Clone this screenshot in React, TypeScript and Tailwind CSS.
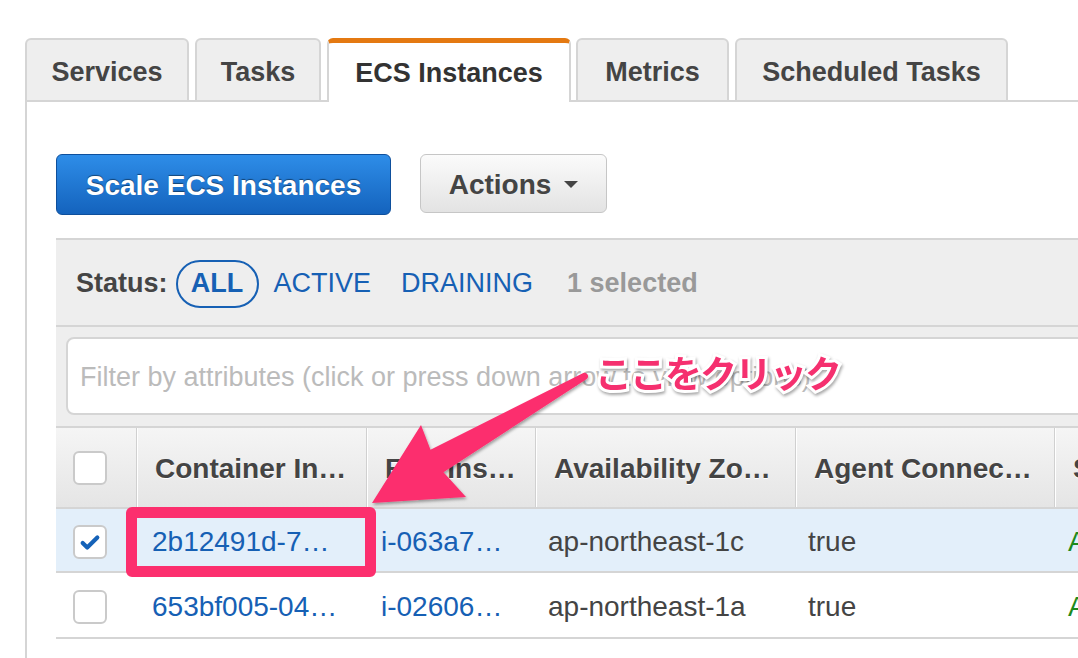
import React from 'react';

const tabs = [
  { label: 'Services', width: 'w-[164px]', gap: '' },
  { label: 'Tasks', width: 'w-[126px]', gap: 'w-[6px]' },
  { label: 'ECS Instances', width: 'w-[244px]', gap: 'w-[6px]', active: true },
  { label: 'Metrics', width: 'w-[153px]', gap: 'w-[5px]' },
  { label: 'Scheduled Tasks', width: 'w-[273px]', gap: 'w-[6px]' },
];

const rows = [
  { selected: true, id: '2b12491d-7…', ec2: 'i-063a7…', az: 'ap-northeast-1c', agent: 'true', status: 'ACTIVE', h: 'h-[64px]' },
  { selected: false, id: '653bf005-04…', ec2: 'i-02606…', az: 'ap-northeast-1a', agent: 'true', status: 'ACTIVE', h: 'h-[66px]' },
];

const cols = 'grid grid-cols-[80px_230px_169px_260px_259px_200px]';

const Checkbox: React.FC<{ checked?: boolean }> = ({ checked }) => (
  <div className="ml-[17px] flex h-[34px] w-[34px] items-center justify-center rounded-[6px] border-2 border-[#cacaca] bg-white">
    {checked && (
      <svg width="22" height="22" viewBox="0 0 24 24">
        <path d="M4 13l5 5L20 7" fill="none" stroke="#1562b8" strokeWidth="4.5" strokeLinecap="round" strokeLinejoin="round" />
      </svg>
    )}
  </div>
);

const App: React.FC = () => {
  return (
    <div className="relative h-[658px] w-[1078px] overflow-hidden bg-white font-['Liberation_Sans',Arial,sans-serif] text-[#444]">
      <div className="pl-[25px] pt-[38px]">
        {/* tabs */}
        <div className="flex items-end">
          {tabs.map((t) => (
            <React.Fragment key={t.label}>
              {t.gap && <div className={`h-[2px] ${t.gap} bg-[#d5d5d5]`} />}
              {t.active ? (
                <div className={`${t.width} flex h-[64px] items-center justify-center rounded-t-[6px] border-x-2 border-t-[5px] border-x-[#d5d5d5] border-t-[#e47911] bg-white pt-[1px] text-[27px] font-bold text-[#333]`}>
                  {t.label}
                </div>
              ) : (
                <div className={`${t.width} flex h-[64px] items-center justify-center rounded-t-[6px] border-2 border-[#d5d5d5] bg-[#eeeeee] pt-[4px] text-[27px] font-bold text-[#444]`}>
                  {t.label}
                </div>
              )}
            </React.Fragment>
          ))}
          <div className="h-[2px] flex-1 bg-[#d5d5d5]" />
        </div>

        {/* panel */}
        <div className="h-[560px] border-l-2 border-[#d5d5d5] pl-[29px] pt-[52px]">
          <div className="flex items-start gap-[29px]">
            <button className="flex h-[61px] w-[335px] items-center justify-center rounded-[6px] border border-[#0e4f9c] bg-gradient-to-b from-[#2e8de8] to-[#1463bd] pt-[2px] text-[28px] font-bold text-white [text-shadow:0_-1px_1px_rgba(0,0,0,0.45)]">
              Scale ECS Instances
            </button>
            <button className="flex h-[59px] w-[187px] items-center justify-center gap-[13px] rounded-[6px] border border-[#c6c6c6] bg-gradient-to-b from-[#fbfbfb] to-[#e3e3e3] pt-[2px] text-[28px] font-bold text-[#444]">
              Actions
              <svg width="14" height="8" viewBox="0 0 14 8">
                <polygon points="0,0 14,0 7,7" fill="#444" />
              </svg>
            </button>
          </div>

          <div className="mt-[23px] border-t-2 border-[#d5d5d5] bg-[#eeeeee]">
            <div className="flex h-[87px] items-center border-b-2 border-[#d5d5d5] pl-[20px] pt-[2px] text-[27px]">
              <span className="font-bold text-[#444]">Status:</span>
              <span className="ml-[8px] flex h-[48px] w-[83px] items-center justify-center rounded-full border-2 border-[#1660b4] font-bold text-[#1660b4]">
                ALL
              </span>
              <span className="ml-[15px] text-[#1660b4]">ACTIVE</span>
              <span className="ml-[30px] text-[#1660b4]">DRAINING</span>
              <span className="ml-[34px] font-bold text-[#999]">1 selected</span>
            </div>
            <div className="pb-[11px] pl-[10px] pt-[10px]">
              <div className="-mr-[30px] flex h-[78px] items-center rounded-[8px] border-2 border-[#d5d5d5] bg-white pl-[12px] pt-[2px] text-[27px] text-[#bbbbbb]">
                Filter by attributes (click or press down arrow to view options)
              </div>
            </div>
          </div>

          {/* table */}
          <div className="w-[1200px]">
            <div className={`${cols} h-[83px] border-y-2 border-y-[#d5d5d5] bg-gradient-to-b from-[#f5f5f5] to-[#e5e5e5] text-[28px] font-bold text-[#444] [text-shadow:0_1px_0_#fff]`}>
              <div className="flex items-center">
                <Checkbox />
              </div>
              {['Container In…', 'EC2 Ins…', 'Availability Zo…', 'Agent Connec…', 'Status'].map((h) => (
                <div key={h} className="flex items-center whitespace-nowrap border-l border-[#d0d0d0] pl-[18px] pt-[2px] shadow-[inset_1px_0_0_#ffffff]">
                  {h}
                </div>
              ))}
            </div>
            {rows.map((r) => (
              <div
                key={r.id}
                className={`${cols} ${r.h} whitespace-nowrap border-b-2 border-[#d5d5d5] pt-[3px] text-[28px] ${r.selected ? 'bg-[#e3effa]' : 'bg-white'}`}
              >
                <div className="flex items-center">
                  <Checkbox checked={r.selected} />
                </div>
                <div className="flex items-center pl-[16px] text-[#1660b4]">{r.id}</div>
                <div className="flex items-center pl-[15px] text-[#1660b4]">{r.ec2}</div>
                <div className="flex items-center pl-[13px]">{r.az}</div>
                <div className="flex items-center pl-[13px]">{r.agent}</div>
                <div className="flex items-center pl-[14px] text-[#1d8a1d]">{r.status}</div>
              </div>
            ))}
          </div>
        </div>
      </div>

      {/* annotation: highlight box */}
      <div className="absolute left-[126px] top-[507px] h-[70px] w-[250px] rounded-[6px] border-[11px] border-[#fc2f6e]" />

      {/* annotation: arrow */}
      <svg className="pointer-events-none absolute left-0 top-0" width="1078" height="658" viewBox="0 0 1078 658">
        <defs>
          <filter id="shadow" x="-20%" y="-20%" width="140%" height="140%">
            <feDropShadow dx="1" dy="2" stdDeviation="1.5" floodColor="#000" floodOpacity="0.35" />
          </filter>
        </defs>
        <path
          d="M583.3 373 L430.5 449.7 L421 425 L372 503 L466 497 L443.5 472.3 L586.7 379 A3.5 3.5 0 0 0 583.3 373 Z"
          fill="#fc2f6e"
          filter="url(#shadow)"
        />
      </svg>

      {/* annotation: label */}
      <div className="absolute left-[595px] top-[354px] font-['Noto_Sans_CJK_JP',sans-serif] text-[37px] font-bold leading-none tracking-[-2px] text-[#f5306f] [-webkit-text-stroke:6px_#ffffff] [paint-order:stroke_fill] [filter:drop-shadow(1px_2px_1.5px_rgba(0,0,0,0.35))]">
        ここをクリック
      </div>
    </div>
  );
};

export default App;
